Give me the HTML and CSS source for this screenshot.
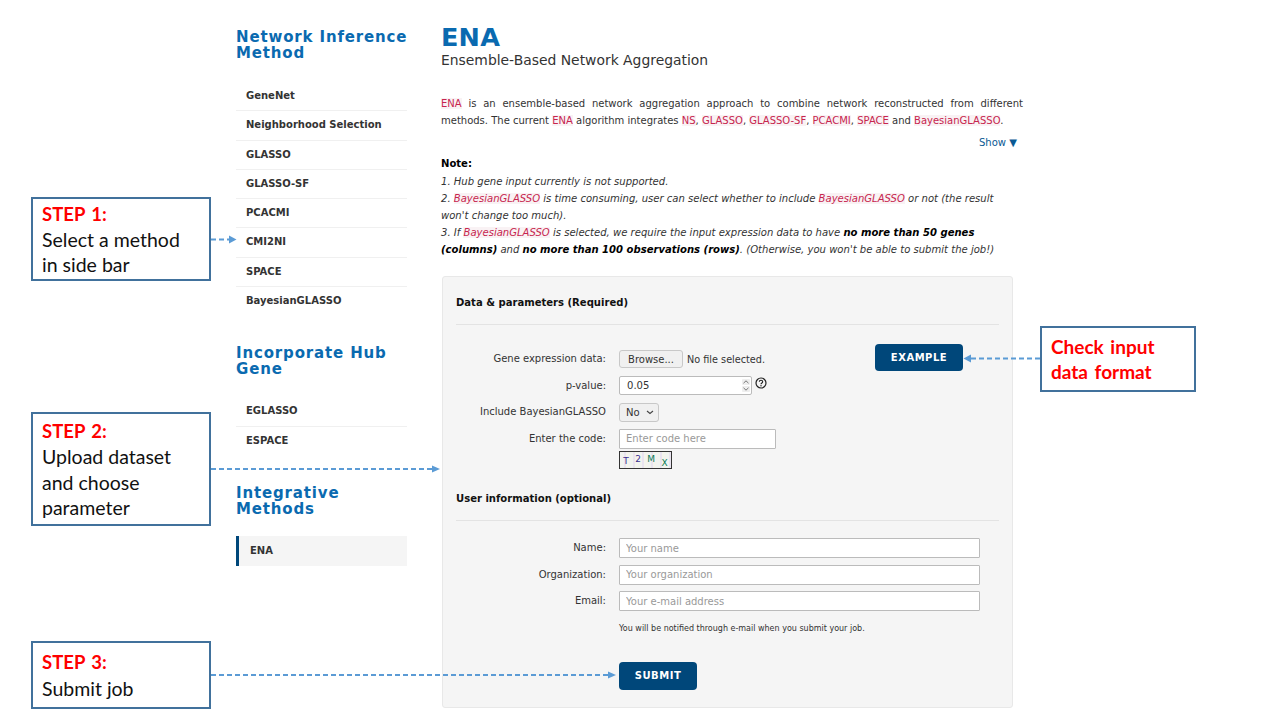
FILE: index.html
```html
<!DOCTYPE html>
<html lang="en">
<head>
    <meta charset="UTF-8">
    <meta name="viewport" content="width=device-width, initial-scale=1.0">
    <title>ENA - Ensemble-Based Network Aggregation</title>
    <link rel="stylesheet" href="styles.css">
</head>
<body>
    <div class="page">
        <!-- Side bar -->
        <nav class="sidebar">
            <h3 class="side-title">Network Inference Method</h3>
            <ul class="side-list">
                <li>GeneNet</li>
                <li>Neighborhood Selection</li>
                <li>GLASSO</li>
                <li>GLASSO-SF</li>
                <li>PCACMI</li>
                <li>CMI2NI</li>
                <li>SPACE</li>
                <li>BayesianGLASSO</li>
            </ul>
            <h3 class="side-title">Incorporate Hub Gene</h3>
            <ul class="side-list">
                <li>EGLASSO</li>
                <li>ESPACE</li>
            </ul>
            <h3 class="side-title">Integrative Methods</h3>
            <ul class="side-list">
                <li class="active">ENA</li>
            </ul>
        </nav>

        <!-- Main content -->
        <main class="content">
            <h1 class="title">ENA</h1>
            <p class="subtitle">Ensemble-Based Network Aggregation</p>
            <p class="intro"><code>ENA</code> is an ensemble-based network aggregation approach to combine network reconstructed from different methods. The current <code>ENA</code> algorithm integrates <code>NS</code>, <code>GLASSO</code>, <code>GLASSO-SF</code>, <code>PCACMI</code>, <code>SPACE</code> and <code>BayesianGLASSO</code>.</p>
            <div class="show-row"><span class="show">Show &#9660;</span></div>
            <div class="note">
                <strong>Note:</strong>
                <em>1. Hub gene input currently is not supported.</em><br>
                <em>2. <code>BayesianGLASSO</code> is time consuming, user can select whether to include <code>BayesianGLASSO</code> or not (the result won't change too much).</em><br>
                <em>3. If <code>BayesianGLASSO</code> is selected, we require the input expression data to have <b>no more than 50 genes (columns)</b> and <b>no more than 100 observations (rows)</b>. (Otherwise, you won't be able to submit the job!)</em>
            </div>

            <form class="panel">
                <h4 class="panel-title">Data &amp; parameters (Required)</h4>
                <div class="upper">
                    <div class="form-grid">
                        <label>Gene expression data:</label>
                        <div class="field"><button type="button" class="browse">Browse...</button><span class="file-name">No file selected.</span></div>
                        <label>p-value:</label>
                        <div class="field">
                            <div class="number"><span>0.05</span>
                                <span class="spin">
                                    <svg viewBox="0 0 8 6" width="8" height="6"><path d="M1.500 4.200 4 1.800l2.500 2.400" fill="none" stroke="#777" stroke-width="1"/></svg>
                                    <svg viewBox="0 0 8 6" width="8" height="6"><path d="M1.500 1.800 4 4.200l2.500-2.400" fill="none" stroke="#777" stroke-width="1"/></svg>
                                </span>
                            </div>
                            <svg class="help" viewBox="0 0 12 12" width="12" height="12"><circle cx="6" cy="6" r="5" fill="none" stroke="#222" stroke-width="1.200"/><path d="M4.300 4.800c0-1 .8-1.600 1.700-1.600s1.700.6 1.700 1.500c0 1.300-1.700 1.300-1.700 2.500" fill="none" stroke="#222" stroke-width="1.100"/><circle cx="6" cy="8.800" r=".7" fill="#222"/></svg>
                        </div>
                        <label>Include BayesianGLASSO</label>
                        <div class="field">
                            <div class="select">No
                                <svg viewBox="0 0 8 5" width="8" height="5"><path d="M1 1l3 2.500L7 1" fill="none" stroke="#444" stroke-width="1.100"/></svg>
                            </div>
                        </div>
                        <label>Enter the code:</label>
                        <div class="field"><input class="text-input code-input" type="text" placeholder="Enter code here"></div>
                    </div>
                    <button type="button" class="primary example">EXAMPLE</button>
                </div>
                <div class="captcha"><span>T</span><span class="up">2</span><span class="green up">M</span><span class="green down">X</span></div>

                <h4 class="panel-title user-title">User information (optional)</h4>
                <div class="form-grid user-grid">
                    <label>Name:</label>
                    <div class="field"><input class="text-input" type="text" placeholder="Your name"></div>
                    <label>Organization:</label>
                    <div class="field"><input class="text-input" type="text" placeholder="Your organization"></div>
                    <label>Email:</label>
                    <div class="field"><input class="text-input" type="text" placeholder="Your e-mail address"></div>
                </div>
                <p class="notified">You will be notified through e-mail when you submit your job.</p>
                <button type="button" class="primary submit">SUBMIT</button>
            </form>
        </main>
    </div>

    <!-- Annotations drawn over the page -->
    <svg class="arrows" width="1280" height="720" viewBox="0 0 1280 720">
        <g stroke="#5b9bd5" stroke-width="1.800" stroke-dasharray="5 3" fill="none">
            <path d="M211 239.500H230"/>
            <path d="M211 469H432"/>
            <path d="M1040 358.500H971"/>
            <path d="M211 675H608"/>
        </g>
        <g fill="#5b9bd5">
            <path d="M229 235.500 236.500 239.500 229 243.500z"/>
            <path d="M432 465.500 440 469 432 472.500z"/>
            <path d="M971 354.500 963.500 358.500 971 362.500z"/>
            <path d="M608 671.500 616 675 608 678.500z"/>
        </g>
    </svg>
    <div class="callout step1"><div><b>STEP 1:</b><br>Select a method<br>in side bar</div></div>
    <div class="callout step2"><div><b>STEP 2:</b><br>Upload dataset<br>and choose<br>parameter</div></div>
    <div class="callout step3"><div><b>STEP 3:</b><br>Submit job</div></div>
    <div class="callout check"><div><b>Check input<br>data format</b></div></div>
</body>
</html>
```

FILE: styles.css
```css
/* Basic page styling */
body {
    margin: 0;
    background-color: #fff;
    color: #333;
    font-family: "DejaVu Sans", sans-serif;
    font-size: 10.050px;
}

.page {
    display: flex;
    align-items: flex-start;
    gap: 34px;
    height: 720px;
    overflow: hidden;
    padding-left: 236px;
    box-sizing: border-box;
}

/* Side bar */
.sidebar {
    width: 171px;
    flex: none;
    padding-top: 29px;
}

.side-title {
    margin: 0 -3px 0 0;
    color: #0a6ab0;
    font-size: 15px;
    line-height: 16px;
    letter-spacing: 0.850px;
    font-weight: bold;
}

.side-list {
    list-style: none;
    margin: 20px 0 30px;
    padding: 0;
}

.side-list:first-of-type {
    margin-top: 21px;
}

.side-list:last-child {
    margin-top: 19px;
}

.side-list li {
    height: 28.300px;
    line-height: 28px;
    padding-left: 10px;
    border-bottom: 1px solid #f0f0f0;
    font-weight: bold;
    font-size: 10px;
    color: #333;
}

.side-list li:last-child {
    border-bottom: none;
}

.side-list .active {
    height: 30px;
    line-height: 30px;
    padding-left: 11px;
    background-color: #f5f5f5;
    border-left: 3px solid #00477a;
}

/* Main content */
.content {
    width: 582px;
    flex: none;
    padding-top: 22px;
}

.title {
    margin: 0;
    color: #0a6ab0;
    font-size: 25.500px;
    line-height: 30px;
    letter-spacing: 0.2px;
}

.subtitle {
    margin: 0 0 27px;
    font-size: 13.900px;
    line-height: 16px;
}

.intro {
    margin: 0;
    font-size: 10px;
    line-height: 17px;
    text-align: justify;
}

code {
    font-family: inherit;
    color: #c7254e;
    background-color: #f9f2f4;
}

.show-row {
    text-align: right;
    padding-right: 6px;
    line-height: 16px;
    margin-top: 6px;
}

.show {
    color: #0a5a94;
}

.note {
    margin-top: 4px;
    line-height: 17px;
}

.note strong {
    display: block;
    line-height: 18px;
}

.note strong,
.note b {
    color: #000;
}

/* Form panel */
.panel {
    margin: 18px 10px 0 1px;
    height: 432px;
    box-sizing: border-box;
    padding: 19px 13px 0;
    background-color: #f5f5f5;
    border: 1px solid #e8e8e8;
    border-radius: 3px;
}

.panel-title {
    margin: 0;
    padding-bottom: 14px;
    border-bottom: 1px solid #e3e3e3;
    color: #111;
    font-size: 10.050px;
    line-height: 14px;
}

.upper {
    display: flex;
    align-items: flex-start;
    margin-top: 24px;
}

.form-grid {
    display: grid;
    grid-template-columns: 150px 1fr;
    column-gap: 13px;
    row-gap: 6px;
    width: 419px;
    flex: none;
}

.form-grid label {
    text-align: right;
    line-height: 20px;
    font-size: 10px;
}

.field {
    display: flex;
    align-items: center;
    height: 20.500px;
}

.browse {
    height: 18px;
    width: 64px;
    padding: 0;
    background-color: #f0f0f0;
    border: 1px solid #c8c8c8;
    border-radius: 3px;
    font: 10px "DejaVu Sans", sans-serif;
    color: #333;
}

.file-name {
    margin-left: 4px;
    font-size: 9.700px;
}

.number {
    display: flex;
    align-items: center;
    justify-content: space-between;
    box-sizing: border-box;
    width: 133px;
    height: 19px;
    padding: 0 1px 0 7px;
    background-color: #fff;
    border: 1px solid #bbb;
    border-radius: 2px;
}

.spin {
    display: flex;
    flex-direction: column;
    align-items: center;
    gap: 1px;
}

.spin svg {
    display: block;
    background-color: #eee;
    border-radius: 1px;
}

.help {
    margin: 0 0 6px 3px;
}

.select {
    display: flex;
    align-items: center;
    gap: 6px;
    box-sizing: border-box;
    width: 40px;
    height: 19px;
    padding-left: 6px;
    background-color: #f0f0f0;
    border: 1px solid #c8c8c8;
    border-radius: 3px;
}

.text-input {
    box-sizing: border-box;
    width: 100%;
    height: 20px;
    padding: 0 6px;
    background-color: #fff;
    border: 1px solid #bbb;
    border-radius: 1px;
    font: 10px "DejaVu Sans", sans-serif;
}

.text-input::placeholder {
    color: #999;
}

.code-input {
    width: 157px;
}

.primary {
    padding: 0;
    color: #fff;
    background-color: #00477a;
    border: none;
    border-radius: 4px;
    font: bold 10px "DejaVu Sans", sans-serif;
    letter-spacing: 0.5px;
}

.example {
    width: 88px;
    height: 27px;
    margin: -5px 0 0 0;
}

.captcha {
    display: flex;
    justify-content: space-around;
    box-sizing: border-box;
    width: 53px;
    height: 18px;
    margin: 2px 0 0 163px;
    padding-top: 1px;
    background: repeating-linear-gradient(90deg, #f1f3ef 0 4px, #e9e4ef 4px 6px, #f4f4ec 6px 9px);
    border: 1px solid #333;
    color: #3a2f8f;
    font-size: 9px;
    line-height: 17px;
}

.captcha .up {
    margin-top: -2px;
}

.captcha .down {
    margin-top: 2px;
}

.captcha .green {
    color: #0b7a55;
}

.user-title {
    margin-top: 23px;
}

.user-grid {
    width: 524px;
    margin-top: 17px;
}

.notified {
    margin: 11px 0 0 163px;
    font-size: 8px;
    line-height: 12px;
}

.submit {
    display: block;
    width: 78px;
    height: 28px;
    margin: 27px 0 0 163px;
}

/* Annotations on top of the page */
.arrows {
    position: absolute;
    left: 0;
    top: 0;
    pointer-events: none;
}

.callout {
    position: absolute;
    box-sizing: border-box;
    display: flex;
    align-items: center;
    padding: 0 9px;
    background-color: #fff;
    border: 2px solid #41719c;
    color: #111;
    font-family: Lato, sans-serif;
    font-size: 19.500px;
    line-height: 25.300px;
}

.callout b {
    color: #f00;
    font-size: 18.500px;
    word-spacing: 2px;
}

.callout.check b {
    font-size: 19px;
}

.step1 {
    left: 31px;
    top: 197px;
    width: 180px;
    height: 84px;
}

.step2 {
    left: 31px;
    top: 412px;
    width: 180px;
    height: 114px;
}

.step3 {
    left: 31px;
    top: 641px;
    width: 180px;
    height: 68px;
}

.check {
    left: 1040px;
    top: 326px;
    width: 156px;
    height: 66px;
}
```
